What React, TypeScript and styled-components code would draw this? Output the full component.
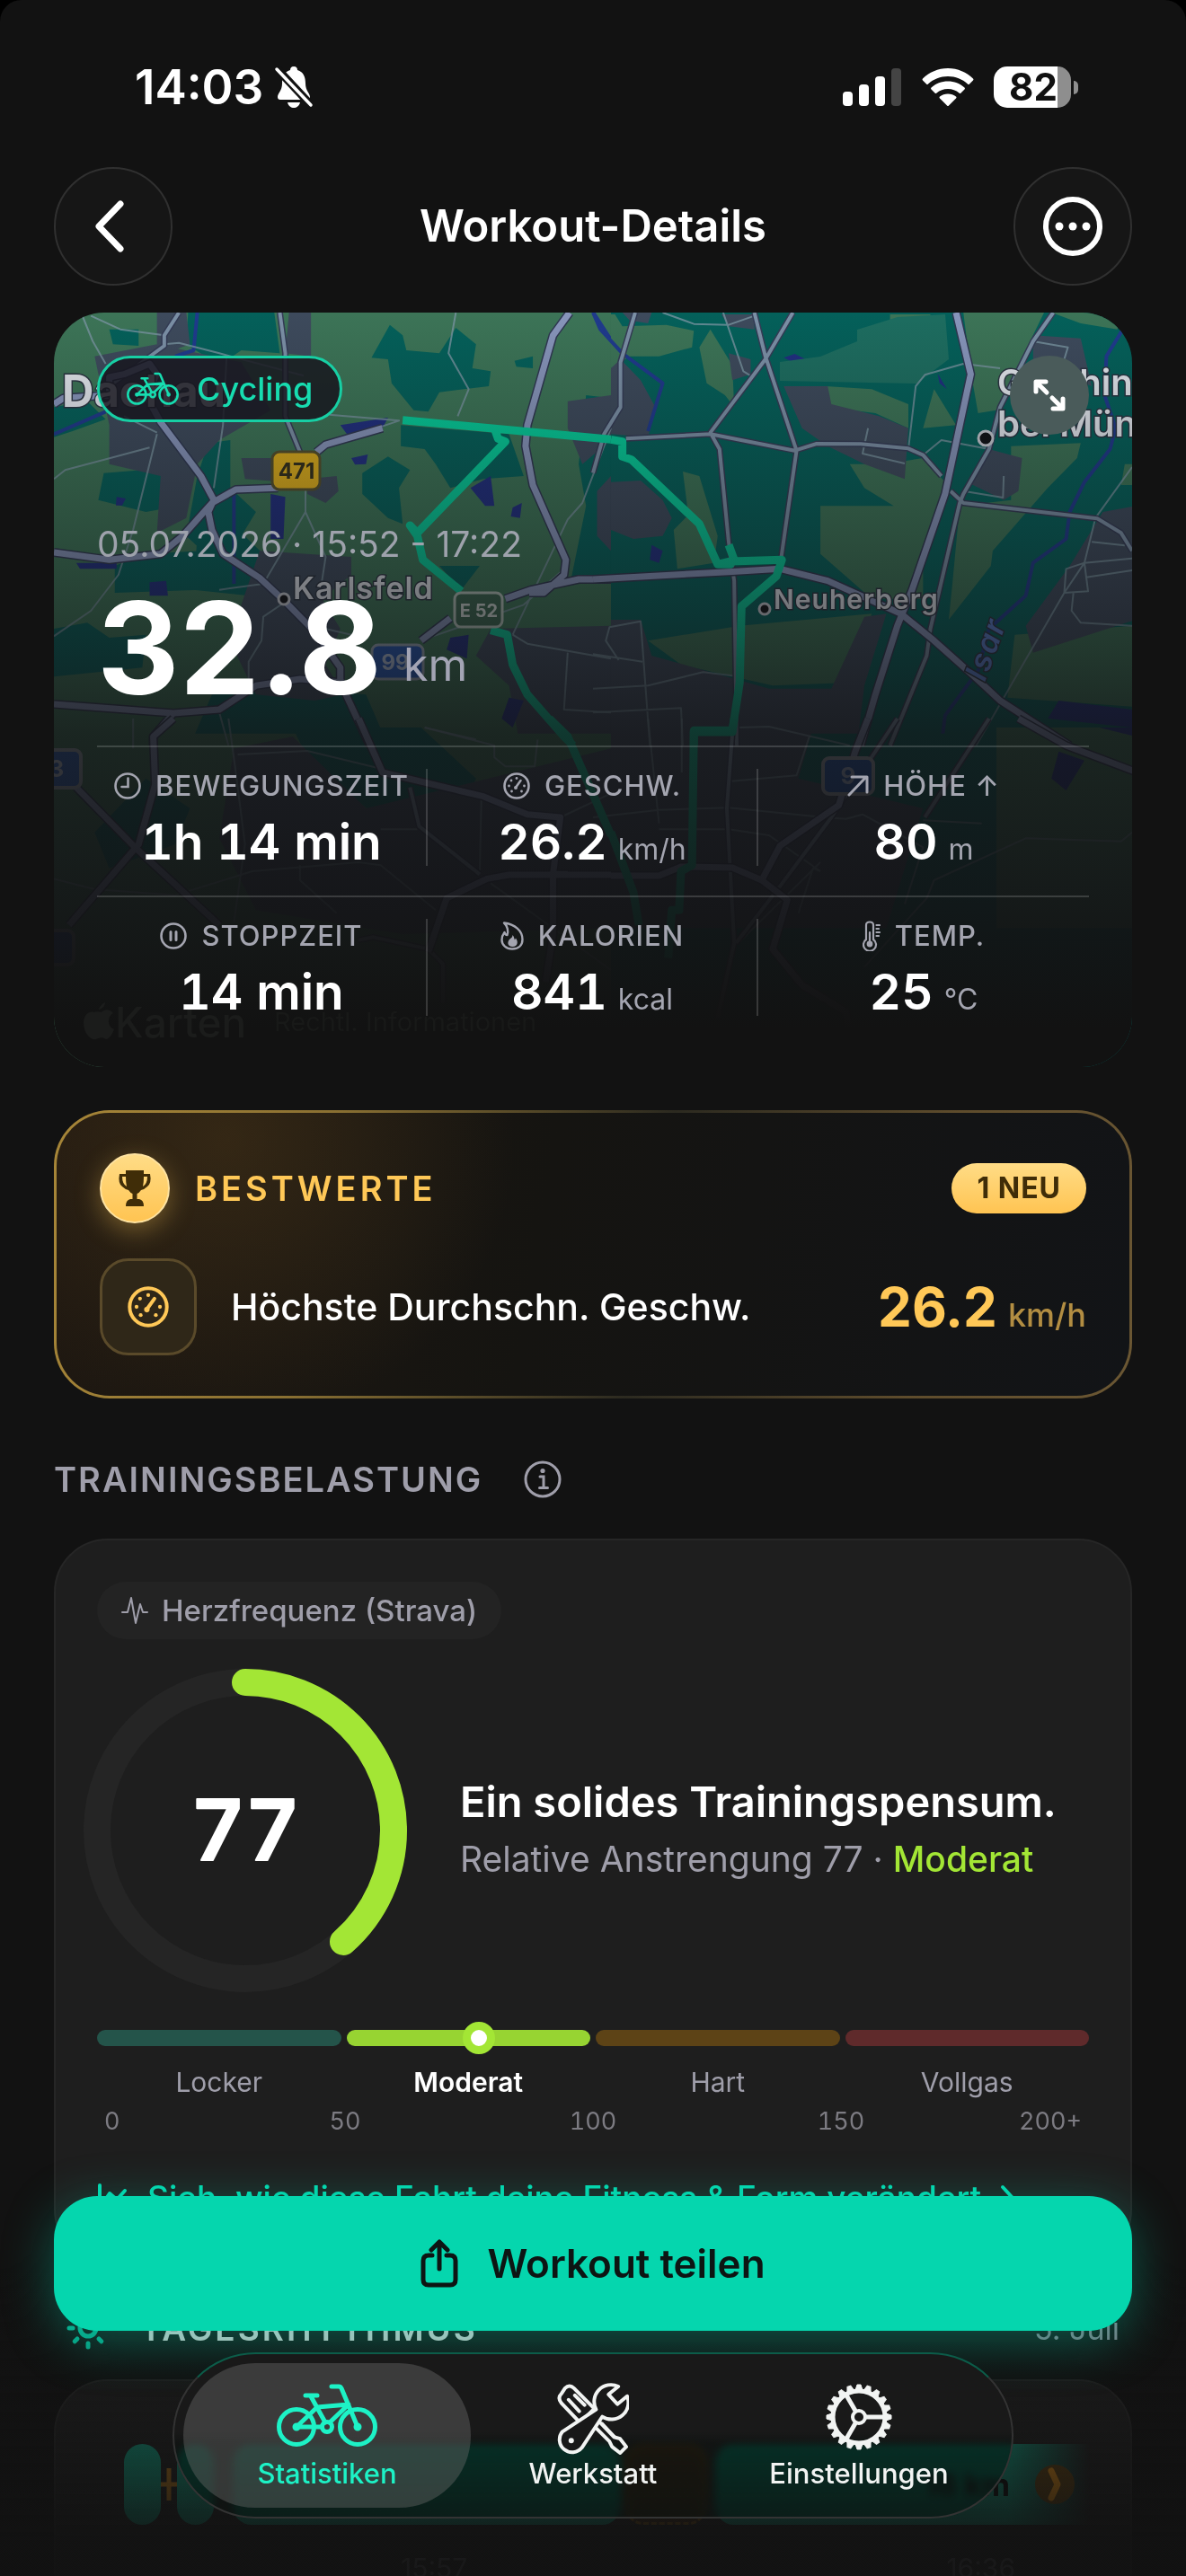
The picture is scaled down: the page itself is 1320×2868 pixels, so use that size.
import React from 'react'
import styled, { createGlobalStyle } from 'styled-components'

const mint = '#05d6ae'
const lime = '#a3e635'
const muted = '#9f9eaa'

const GlobalStyle = createGlobalStyle`
  * { box-sizing: border-box; }
  body {
    margin: 0;
    background: #000;
    color: #fff;
    font-family: Inter, "Liberation Sans", sans-serif;
  }
  button {
    border: 0;
    padding: 0;
    background: none;
    color: inherit;
    font: inherit;
    cursor: pointer;
  }
  h1, h2, h3, p { margin: 0; font: inherit; }
  svg { display: block; flex: none; }
`

const Screen = styled.div`
  height: 100vh;
  overflow-y: auto;
  scrollbar-width: none;
  background: #121212;
  border-radius: 24px 24px 0 0;
`

/* status bar and header */

const StatusBar = styled.div`
  display: flex;
  align-items: center;
  justify-content: space-between;
  height: 60px;
  margin-top: 67px;
  padding: 0 120px 0 150px;
`

const StatusGroup = styled.div<{ $gap: number }>`
  display: flex;
  align-items: center;
  gap: ${(props) => props.$gap}px;
`

const Clock = styled.span`
  font-size: 53px;
  font-weight: 600;
  line-height: 64px;
`

const Battery = styled.span`
  display: flex;
  align-items: center;
  gap: 3px;
`

const BatteryBody = styled.span`
  width: 86px;
  height: 46px;
  padding-left: 2px;
  border-radius: 15px;
  background: linear-gradient(90deg, #fff 82%, #8e8e8e 82%);
  color: #111;
  font-size: 42px;
  font-weight: 700;
  line-height: 46px;
  text-align: center;
`

const BatteryCap = styled.span`
  width: 5px;
  height: 15px;
  border-radius: 0 5px 5px 0;
  background: #8e8e8e;
`

const Header = styled.header`
  display: flex;
  align-items: center;
  justify-content: space-between;
  margin-top: 59px;
  padding: 0 60px;
`

const RoundButton = styled.button`
  display: grid;
  place-items: center;
  width: 132px;
  height: 132px;
  border: 2px solid #303030;
  border-radius: 50%;
  background: #161616;
`

const Title = styled.h1`
  font-size: 49px;
  font-weight: 600;
  line-height: 60px;
`

const Main = styled.main`
  display: flex;
  flex-direction: column;
  padding: 30px 60px 460px;
`

/* map card */

const MapCard = styled.section`
  position: relative;
  overflow: hidden;
  padding: 48px 48px 24px;
  border-radius: 56px;
  box-shadow: inset 0 0 0 2px #181818;
`

const MapCanvas = styled.svg`
  position: absolute;
  inset: 0;
  width: 100%;
  height: 100%;
`

const MapContent = styled.div`
  position: relative;
`

const MapTop = styled.div`
  display: flex;
  align-items: flex-start;
  justify-content: space-between;
`

const SportPill = styled.span`
  display: flex;
  align-items: center;
  gap: 20px;
  height: 74px;
  padding: 0 30px;
  border: 3px solid #17cfa4;
  border-radius: 37px;
  background: rgba(23, 22, 30, 0.84);
  color: #17dcb0;
  font-size: 36px;
  font-weight: 500;
`

const ExpandButton = styled.button`
  display: grid;
  place-items: center;
  width: 88px;
  height: 88px;
  border-radius: 50%;
  background: #4a5b5a;
`

const DateLine = styled.p`
  margin-top: 98px;
  color: #9ea2ac;
  font-size: 39px;
  line-height: 48px;
`

const Distance = styled.div`
  display: flex;
  align-items: flex-end;
  gap: 24px;
  margin: 19px 0 37px;
  font-size: 142px;
  font-weight: 700;
  line-height: 144px;
`

const DistanceUnit = styled.span`
  padding-bottom: 26px;
  color: #a3a4b4;
  font-size: 50px;
  font-weight: 400;
  line-height: 54px;
`

const MetricGrid = styled.div`
  display: grid;
  grid-template-columns: repeat(3, 1fr);
`

const MetricCell = styled.div`
  padding: 24px 0 33px;
  border-top: 2px solid rgba(255, 255, 255, 0.16);

  &:not(:nth-child(3n)) > div {
    border-right: 2px solid rgba(255, 255, 255, 0.16);
  }
`

const Metric = styled.div`
  display: flex;
  flex-direction: column;
  align-items: center;
  gap: 16px;
`

const MetricLabel = styled.span`
  display: flex;
  align-items: center;
  gap: 16px;
  color: #a4a5b0;
  font-size: 31px;
  font-weight: 500;
  letter-spacing: 1px;
  line-height: 38px;
`

const MetricValue = styled.span`
  font-size: 55px;
  font-variant-numeric: tabular-nums;
  font-weight: 600;
  line-height: 54px;
`

const MetricUnit = styled.span`
  margin-left: 12px;
  color: #a4a5b0;
  font-size: 32px;
  font-weight: 400;
  line-height: 32px;
`

/* personal bests */

const BestCard = styled.section`
  display: flex;
  flex-direction: column;
  gap: 39px;
  margin-top: 48px;
  padding: 45px 48px;
  border: 3px solid transparent;
  border-radius: 62px;
  background:
    radial-gradient(circle at 190px 30px, rgba(86, 62, 26, 0.42), transparent 320px) padding-box,
    linear-gradient(100deg, #1f1811, #151411 45%, #121417) padding-box,
    linear-gradient(100deg, #a78638, #8a7032 25%, #2c2a20 55%, #5e4c2c 80%, #6b5733) border-box;
`

const BestRow = styled.div`
  display: flex;
  align-items: center;
`

const Trophy = styled.span`
  display: grid;
  place-items: center;
  width: 78px;
  height: 78px;
  border: 2px solid #ffe3a0;
  border-radius: 50%;
  background: linear-gradient(#ffdc86, #ffc452);
  box-shadow: 0 8px 28px rgba(255, 200, 87, 0.35);
`

const BestTitle = styled.h2`
  flex: 1;
  margin-left: 28px;
  color: #ffc857;
  font-size: 38px;
  font-weight: 600;
  letter-spacing: 4px;
`

const NewBadge = styled.span`
  padding: 0 28px;
  border-radius: 28px;
  background: linear-gradient(#ffdc86, #ffc452);
  color: #402d08;
  font-size: 32px;
  font-weight: 700;
  letter-spacing: 1px;
  line-height: 56px;
`

const BestTile = styled.span`
  display: grid;
  place-items: center;
  width: 108px;
  height: 108px;
  border: 3px solid #5a4a2a;
  border-radius: 32px;
  background: #2f2718;
  color: #ffc857;
`

const BestName = styled.span`
  flex: 1;
  margin-left: 38px;
  font-size: 41px;
  font-weight: 500;
`

const BestValue = styled.span`
  color: #ffc857;
  font-size: 60px;
  font-weight: 700;
`

const BestUnit = styled.span`
  margin-left: 12px;
  color: #b28d42;
  font-size: 36px;
  font-weight: 500;
`

/* training load */

const SectionHead = styled.div`
  display: flex;
  align-items: center;
  gap: 46px;
  height: 56px;
  margin: 62px 0 38px;
  color: ${muted};
`

const SectionTitle = styled.h2`
  font-size: 38px;
  font-weight: 600;
  letter-spacing: 2px;
`

const Card = styled.section`
  padding: 46px;
  border: 2px solid #262626;
  border-radius: 60px;
  background: #1e1e1e;
`

const SourceChip = styled.span`
  display: inline-flex;
  align-items: center;
  gap: 15px;
  height: 64px;
  padding: 0 27px;
  border-radius: 32px;
  background: #232323;
  color: ${muted};
  font-size: 33px;
  font-weight: 500;
  vertical-align: top;
`

const LoadRow = styled.div`
  display: flex;
  align-items: center;
  gap: 74px;
  margin: 48px 0 57px;
`

const Ring = styled.svg`
  overflow: visible;
  font-size: 94px;
  font-variant-numeric: tabular-nums;
  font-weight: 600;
`

const LoadTitle = styled.h3`
  font-size: 47px;
  font-weight: 600;
  line-height: 64px;
`

const LoadSub = styled.p`
  color: ${muted};
  font-size: 39px;
  line-height: 64px;
`

const Highlight = styled.span`
  color: ${lime};
  font-weight: 500;
`

const Zones = styled.div`
  position: relative;
  display: grid;
  grid-template-columns: repeat(4, 1fr);
  gap: 20px 6px;
`

const ZoneBar = styled.span<{ $color: string }>`
  height: 18px;
  border-radius: 9px;
  background: ${(props) => props.$color};
`

const ZoneName = styled.span<{ $active: boolean }>`
  color: ${(props) => (props.$active ? '#fff' : muted)};
  font-size: 30px;
  font-weight: ${(props) => (props.$active ? 600 : 400)};
  line-height: 40px;
  text-align: center;
`

const ZoneMarker = styled.span`
  position: absolute;
  top: -9px;
  width: 36px;
  height: 36px;
  margin-left: -18px;
  border: 9px solid ${lime};
  border-radius: 50%;
  background: #fff;
`

const Scale = styled.div`
  display: grid;
  grid-template-columns: 1fr 2fr 2fr 2fr 1fr;
  margin-top: 8px;
  color: #7c7b82;
  font-size: 27px;
  font-variant-numeric: tabular-nums;
  line-height: 32px;
  text-align: center;

  span:first-child { padding-left: 8px; text-align: left; }
  span:last-child { padding-right: 8px; text-align: right; }
`

const FitnessLink = styled.a`
  display: flex;
  align-items: center;
  gap: 20px;
  margin-top: 44px;
  color: ${mint};
  font-size: 37px;
  font-weight: 500;
  line-height: 50px;
  text-decoration: none;
  white-space: nowrap;
`

/* daily rhythm */

const RhythmHead = styled.div`
  display: flex;
  align-items: center;
  height: 56px;
  margin: 44px 0 29px;
  padding: 0 14px;
`

const RhythmTitle = styled.h2`
  flex: 1;
  margin-left: 34px;
  font-size: 37px;
  font-weight: 600;
  letter-spacing: 3px;
`

const RhythmDate = styled.span`
  color: ${muted};
  font-size: 34px;
`

const Track = styled.div`
  display: flex;
  align-items: center;
  height: 90px;
  margin: 24px 0 30px;
  padding-left: 30px;
`

const Ride = styled.span<{ $width: number }>`
  flex: ${(props) => props.$width} 0 0;
  height: 90px;
  border-radius: 21px;
  background: #109377;
`

const LastRide = styled.span`
  display: flex;
  flex: 410 0 0;
  align-items: center;
  justify-content: flex-end;
  gap: 28px;
  height: 90px;
  padding-right: 16px;
  border-radius: 21px 0 0 21px;
  background: linear-gradient(90deg, #109377 78%, transparent);
  color: #050505;
  font-size: 34px;
  font-weight: 700;
`

const TrackGap = styled.span<{ $width: number }>`
  display: grid;
  flex: ${(props) => props.$width} 0 0;
  place-items: center;
`

const Pause = styled.span`
  flex: 88 0 0;
  height: 90px;
  border: 3px dashed #7a5410;
  border-radius: 21px;
  background: #3a2410;
`

const Times = styled.div`
  display: flex;
  justify-content: space-between;
  padding: 0 82px 0 338px;
  color: #6a6a6e;
  font-size: 30px;
`

/* floating dock */

const Dock = styled.div`
  position: fixed;
  right: 0;
  bottom: 0;
  left: 0;
  display: flex;
  flex-direction: column;
  align-items: center;
  gap: 24px;
  padding: 60px 60px 64px;
  background: linear-gradient(transparent 25%, rgba(18, 18, 18, 0.5) 62%, rgba(18, 18, 18, 0.92) 92%);
  pointer-events: none;

  button { pointer-events: auto; }
`

const ShareButton = styled.button`
  display: flex;
  align-items: center;
  justify-content: center;
  gap: 32px;
  width: 100%;
  height: 150px;
  border-radius: 48px;
  background: ${mint};
  box-shadow: 0 12px 56px rgba(5, 214, 174, 0.36);
  color: #0d1513;
  font-size: 44px;
  font-weight: 600;
`

const TabBar = styled.nav`
  display: grid;
  grid-template-columns: repeat(3, 296px);
  height: 185px;
  padding: 10px 22px;
  border: 2px solid #333;
  border-top-color: #0c5c49;
  border-radius: 93px;
  background: linear-gradient(#191919 48%, rgba(12, 18, 16, 0.5) 56%);
  backdrop-filter: blur(4px) saturate(1.4);
`

const Tab = styled.button<{ $active?: boolean }>`
  display: flex;
  flex-direction: column;
  align-items: center;
  justify-content: space-between;
  margin: 0 ${(props) => (props.$active ? -12 : 0)}px;
  padding: 22px 0 18px;
  border-radius: 80px;
  background: ${(props) => (props.$active ? 'rgba(108, 108, 108, 0.42)' : 'none')};
  color: ${(props) => (props.$active ? '#1df2c6' : '#f2f4f3')};
  font-size: 31px;
  font-weight: 500;
  line-height: 40px;
`

/* icons */

const BikeIcon = ({ width, stroke }: { width: number; stroke: number }) => (
  <svg width={width} height={(width * 72) / 112} viewBox="0 -1 112 72" fill="none" stroke="currentColor" strokeWidth={stroke} strokeLinecap="round" strokeLinejoin="round">
    <circle cx="22" cy="48" r="19.5" />
    <circle cx="90" cy="48" r="19.5" />
    <circle cx="56" cy="48" r="5.5" />
    <path d="M50 48H22L45 26L80 23L59 43M32 13H45M38 14L54 43M61 3H69Q71 3 72 5L90 48" />
    <circle cx="22" cy="48" r="2" />
    <circle cx="90" cy="48" r="2" />
  </svg>
)

const ToolsIcon = () => (
  <svg width="80" height="80" viewBox="-1 -1 81 81" fill="none" stroke="currentColor" strokeWidth="4" strokeLinecap="round" strokeLinejoin="round">
    <path d="M8 5Q13 0 18 5L41 28L25 44L4 22Q-1 16 4 11ZM12 18L24 31M19 13L30 24" />
    <path d="M43 39L63 60L70 62L77 71L70 78L61 71L58 65L38 45" />
    <path d="M50 44L66 61" strokeWidth="2" />
    <path d="M68 3A19 19 0 0 0 43 29L5 54A14 14 0 1 0 27 72L50 37A19 19 0 0 0 78 14L67 23L57 12Z" fill="#181818" />
    <circle cx="15" cy="64" r="3" fill="currentColor" stroke="none" />
  </svg>
)

const ChainringIcon = () => (
  <svg width="76" height="76" viewBox="-38 -38 76 76" fill="none" stroke="currentColor" strokeWidth="5">
    <circle r="29" />
    <circle r="7" strokeWidth="4" />
    {[0, 120, 240].map((deg) => (
      <path key={deg} d="M8 0H28" transform={`rotate(${deg})`} />
    ))}
    {Array.from({ length: 20 }, (_, i) => (
      <path key={i} d="M30 -4L36 -2V2L30 4Z" fill="currentColor" strokeWidth="1" transform={`rotate(${i * 18})`} />
    ))}
  </svg>
)

const GaugeIcon = ({ size }: { size: number }) => (
  <svg width={size} height={size} viewBox="0 0 30 30" fill="none" stroke="currentColor" strokeWidth="2.6" strokeLinecap="round">
    <circle cx="15" cy="15" r="13.5" />
    <path d="M14.5 16L19.5 9" />
    <circle cx="14" cy="17" r="2" fill="currentColor" stroke="none" />
    <g fill="currentColor" stroke="none">
      <circle cx="15" cy="6.5" r="1.4" />
      <circle cx="9" cy="9" r="1.4" />
      <circle cx="6.5" cy="15" r="1.4" />
      <circle cx="23.5" cy="15" r="1.4" />
      <circle cx="9.5" cy="21" r="1.4" />
      <circle cx="20.5" cy="21" r="1.4" />
    </g>
  </svg>
)

const ClockIcon = () => (
  <svg width="30" height="30" viewBox="0 0 30 30" fill="none" stroke="currentColor" strokeWidth="2.6" strokeLinecap="round">
    <circle cx="15" cy="15" r="13.5" />
    <path d="M15.5 6.5V16H8.5" />
  </svg>
)

const PauseIcon = () => (
  <svg width="30" height="30" viewBox="0 0 30 30" fill="none" stroke="currentColor" strokeWidth="2.6" strokeLinecap="round">
    <circle cx="15" cy="15" r="13.5" />
    <path d="M12 10.5V19.5M18 10.5V19.5" strokeWidth="3" />
  </svg>
)

const FlameIcon = () => (
  <svg width="26" height="32" viewBox="0 0 26 32" fill="none" stroke="currentColor" strokeWidth="2.4" strokeLinejoin="round">
    <path d="M4 1.500C16 3 24.500 10 24.500 20C24.500 27 19.500 30.500 13 30.500S1.500 26 1.500 20.500C1.500 17 3 14 4.500 12C5 14 6 15 7.500 15C9 11 8 5 4 1.500Z" />
    <path d="M13.500 15C15.500 17 15 19 16 20.500C16.500 19.500 16.500 19 17 18.500C20 22 19.500 28 13.500 28S7 22 11 19C12.500 18 13.500 17 13.500 15Z" fill="currentColor" stroke="none" />
  </svg>
)

const ThermoIcon = () => (
  <svg width="20" height="34" viewBox="0 0 20 34" fill="none" stroke="currentColor" strokeWidth="2.2" strokeLinecap="round">
    <path d="M4 21V5Q4 1.500 8 1.500T12 5V21A7 7 0 1 1 4 21Z" />
    <path d="M8 13V24M15.500 5H19M15.500 9H18M15.500 13H19M15.500 17H18" />
    <circle cx="8" cy="26" r="3.400" fill="currentColor" stroke="none" />
  </svg>
)

const ClimbIcon = () => (
  <svg width="24" height="24" viewBox="0 0 24 24" fill="none" stroke="currentColor" strokeWidth="3" strokeLinecap="round" strokeLinejoin="round">
    <path d="M2 22L21 2M5 2H22V19" />
  </svg>
)

const BellOffIcon = () => (
  <svg width="44" height="48" viewBox="0 0 44 48">
    <path d="M22 1C25 1 26 3 26 5C33 7 35 13 35 20C35 28 40 31 40 35C40 37 39 38 37 38H7C5 38 4 37 4 35C4 31 9 28 9 20C9 13 11 7 18 5C18 3 19 1 22 1ZM15 41H29C28 45 25 47 22 47S16 45 15 41Z" fill="#fff" />
    <path d="M3 3L42 45" stroke="#121212" strokeWidth="9" />
    <path d="M3 4L41 44" stroke="#fff" strokeWidth="3.500" strokeLinecap="round" />
  </svg>
)

/* map drawing, stored as the four tiles of the snapshot */

type Tile = {
  at: string
  base?: string
  teal?: string
  green?: string
  urban?: string
  water?: string
  river?: string
  minor?: string
  mid?: string
  major?: string
  route?: string
}

const tiles: Tile[] = [
  {
    at: 'matrix(.40816 0 0 .33333 -20 -18)',
    base: '#3c7457',
    teal:
      'M415 54H650L665 190L560 180L500 230L410 160ZM200 110H280V165L210 160ZM965 95L1000 130L1010 180L1100 190L1145 105L1200 160L1190 240L1240 250L1235 300L1100 320L1070 385L1030 380L970 290L960 210L915 205ZM1305 215L1355 200V240L1310 235ZM995 430L1290 460L1330 600L1220 610L1130 640L1090 560L1060 510L995 500ZM890 590L960 535L1020 580L990 640L1000 760L960 740L890 660ZM185 590L390 570V700L300 720L170 680ZM470 490L530 480V640L600 720L560 800L480 880L410 800L440 600ZM215 900L300 860L450 850V980L215 990ZM1500 330L1568 340V950L1460 940L1500 700L1480 560ZM49 1110L140 1090L200 1140L300 1130L290 1240L49 1270ZM440 800L560 790L620 860L580 1000L430 980ZM480 1330L700 1310L900 1330L960 1500H420ZM49 370L140 350L190 410L100 450L49 470ZM1100 900L1210 900L1160 980Z',
    urban:
      'M330 54H410L420 160L330 200ZM690 54H750V200L680 190ZM160 200L330 160L560 220L640 380L500 480L440 560L410 740L330 790L340 600L200 560V430ZM560 540H680V620L570 610ZM740 610L820 600L825 650L790 690L740 660ZM610 850L860 870V930L780 1010L830 1110L790 1230L840 1330L760 1350L600 1330L540 1180L560 1030ZM1450 350L1568 330V480L1490 560L1450 440ZM1240 1110L1568 1100V1500H1320L1290 1300L1200 1200ZM1530 650L1568 600V850L1530 800Z',
    water:
      'M640 660L680 670L675 810H640ZM830 430L960 405L945 440L860 480ZM860 540L905 528L900 560L870 562ZM1185 640L1240 600L1250 700L1225 700ZM1300 705L1325 690L1320 740L1295 735ZM310 955L355 950L360 1000H310ZM220 670L245 675L235 698H218ZM110 890H220V910H120ZM1290 1340L1330 1350L1300 1440L1270 1410ZM1130 1140L1180 1130L1175 1210L1120 1180Z',
    river: 'M440 54L430 180L380 200M49 460L190 385M1520 54L1568 145M540 640V960',
    minor:
      'M125 60L155 150L190 225M150 65L230 110L350 130M350 160L390 155L500 190L730 265M330 460L265 780L225 930L150 1050L49 1135M49 610L80 580L310 505M520 200L510 430L485 640M330 455L240 400M1145 54L1125 190L1180 310L1150 400M1568 440L1490 690L1450 745L1300 1130M800 395L990 415L930 440M735 520V720L790 870L780 950M735 720L620 960L500 980M1060 1145L1330 1030L1450 900M1300 1130L1340 1160L1568 1210M1450 1190L1440 1380L1568 1390M770 1105L860 1130M680 1020L620 1070L615 1150L580 1220V1290M500 1390L525 1500M1060 1440L1200 1480',
    mid: 'M390 54L350 130L350 165L200 300M665 54L680 190V400L720 520',
    major:
      'M1455 54L1410 130L1340 430L1335 500L1355 630L1445 880L1440 930L1385 990L1345 990M49 360L75 340L200 330L200 270L240 260L310 225L330 260L300 330L340 420L450 600L485 680L470 720L480 780L510 860L610 940L680 1020L760 1120L830 1240V1290L910 1500M49 855L200 880L340 860L400 800L480 690L545 645L660 640M765 520L790 495L945 440M1050 1150L1130 1075M1280 1010L1350 980L1480 945H1568M49 1362L375 1392L500 1380L600 1300L720 1278L840 1290M375 1392L320 1470V1500',
    route:
      'M1000 413L1568 478M1250 440L1260 475L1280 485L1040 790L1020 765L1040 800L1055 880L1160 985M1240 1115L1285 1130L1300 1230L1340 1330L1440 1470L1465 1500',
  },
  {
    at: 'matrix(.40816 0 0 .33333 600 -18)',
    base: '#04605a',
    green:
      'M49 60H60L80 100L200 95L275 115L270 170L180 200L100 200L49 240ZM320 110L380 230L385 370L360 330L310 290L290 170ZM635 300L760 310L860 360V440L770 390L640 370ZM1010 54H1230L1100 380L1050 390L1030 250ZM930 310L990 430L900 440ZM1140 500L1330 490L1320 540L1240 640L1090 850L1085 900L970 1080L980 960L1000 700L1140 680ZM700 560H800L900 540L960 620L900 900L810 850L820 700L740 640ZM245 585L290 600L340 800L330 890L230 910L220 780L260 730ZM150 1150L400 1100L760 1060L700 1290L490 1300L240 1230ZM1150 1130L1470 1100V1370L1130 1340ZM1250 54H1440L1430 110L1330 90ZM1450 560H1480V630H1440ZM810 60H920V85H810ZM620 700H820L860 850L900 900V1010H760L620 860Z',
    urban:
      'M49 240L75 210L130 280L170 370L150 470L49 460ZM80 54H160L150 90L100 80ZM350 60H440V110L370 100ZM370 190L430 210V260L380 280ZM520 300H640L650 360L780 400L860 440L850 610L740 560L640 500L570 440ZM1080 510L1170 540L1160 650L1120 680L1020 620ZM1200 130L1330 140L1360 300L1200 220ZM1390 720L1480 700V1080L1200 1190L1180 1100L1300 900ZM49 1080H130L160 1200L480 1310H650L740 1070L800 1060L740 1300L720 1500H49ZM49 620L130 615L190 680L215 740L190 800L110 810L49 780Z',
    water:
      'M520 205L550 192L580 210L550 222ZM940 258L965 310L945 290ZM160 830L190 850L180 890L155 880ZM1270 1350L1470 1380V1440L1240 1410Z',
    river:
      'M1445 110L1400 200L1395 330L1425 440L1410 510L1340 620L1300 720L1290 810L1200 890L1180 1000L1080 1110L1050 1250L960 1400L950 1500M0 54L20 110L80 190L190 290L150 450',
    minor:
      'M355 54L410 250L430 265M190 54L275 92L370 95L440 65M1010 225L905 262L880 300L860 510M750 440L735 525L850 558M1010 225L1110 240M900 530L950 480L1080 510M1470 570L1370 740L1340 890L1285 990L1045 1500M1470 875L1340 890L1350 985L1285 990L1290 910L1340 890M1345 938L1470 915M1310 990L1305 1050L1330 1090L1470 1100M1360 820L1450 832M1200 150L1295 170L1285 210M1120 600L1118 672L1010 650M70 1215L35 1150L45 1105L130 1085L155 1500M0 1195L135 1220M0 1310L150 1300L300 1255L390 1268M0 1390L240 1375L245 1500M395 1440L480 1437L700 1500',
    mid:
      'M90 475L320 460L550 515L610 492L730 493L860 508L900 530L950 600M975 650L1010 690L1375 742L1440 790L1470 850M440 54L470 200L555 515L510 900M545 54L470 210L320 455L345 510L370 820L385 950L392 1500M1255 54L1200 150L1110 370L1080 510L1010 660L1000 690L920 1110L910 1200L810 1500M115 54L75 220V370L30 460L0 590',
    major:
      'M990 54L1030 260L960 660L870 980L830 1100L770 1330L730 1500M0 945L370 920L510 910L640 950L840 1060L930 1150L1040 1270L1110 1350L1300 1500',
    route:
      'M49 478L80 485V535L105 545L290 760L340 895H375L385 880L370 830M340 895L375 885L515 880L500 935L405 1035L400 1290L380 1450H275V1500',
  },
  {
    at: 'matrix(.40816 0 0 .33333 -20 452)',
    base: '#3c7457',
    teal: 'M700 30L1050 30L1200 200L1150 330L950 350L740 130ZM300 200L420 300L380 420L200 500L160 380Z',
    urban: 'M540 100L700 60L900 300L1568 100V700L1000 720L600 640L500 400Z',
    minor:
      'M525 0L545 180L570 420L540 680M550 120L740 108L950 170M0 520L160 570L380 590L590 510L880 480L940 490L1090 640M1060 30L1250 90V130L1280 160H1360L1368 70M265 0V100M1568 250L1430 330M1210 520L1215 250M720 490V540L820 650M1040 370H940M1568 840L1240 550',
    mid: 'M1020 230L1045 360L1210 520M880 740L920 730L1070 770L1110 820V950',
    major:
      'M375 0L320 60L325 220L280 420L90 690M110 230L270 430L500 690M880 0L945 180L1220 260L1340 320L1430 330L1410 520L1450 520M1070 780L1120 600L1230 535L1290 522H1568M1410 520V720L1390 880',
    route: 'M1400 0L1450 60L1500 200L1568 390',
  },
  {
    at: 'matrix(.40816 0 0 .33333 600 452)',
    base: '#04605a',
    green: 'M1100 30H1480V700H1100Z',
    urban: 'M49 30L600 30L560 200L900 300L800 700H49Z',
    water: 'M1270 110L1340 140L1290 240L1250 200ZM1380 30H1480V60Z',
    minor:
      'M150 0L180 350M242 0V180M590 60L555 190L370 210M0 330L180 305L370 298L630 330L690 335L735 320L900 430L850 620M900 340L1060 350M1470 380L1440 410L1180 400L930 540L910 600L740 830M620 510L600 500L560 650M400 745L620 480M180 370L370 370L480 390L620 510',
    mid: 'M830 0L650 330L510 560L390 750M1080 0L905 330M380 50L365 300L385 750L340 1000',
    major:
      'M49 525H180L240 495L380 498L460 540L530 605L490 770L570 890L690 980L705 1100M750 0L715 110L670 290L510 425L460 540M1160 0L1290 90L1480 178',
    route: 'M49 380L110 580L125 690M385 0L380 45H275L270 490L240 510L235 640H215L205 800',
  },
]

const line = { vectorEffect: 'non-scaling-stroke' as const, fill: 'none', strokeLinejoin: 'round' as const }

const WorkoutMap = () => (
  <MapCanvas viewBox="0 0 1200 840" preserveAspectRatio="xMidYMid slice" aria-hidden="true">
    <defs>
      <linearGradient id="mapFade" x1="0" y1="0" x2="0" y2="1">
        <stop offset="0" stopColor="#121212" stopOpacity="0" />
        <stop offset=".3" stopColor="#121214" stopOpacity=".4" />
        <stop offset=".45" stopColor="#121214" stopOpacity=".62" />
        <stop offset=".56" stopColor="#121214" stopOpacity=".8" />
        <stop offset=".76" stopColor="#121214" stopOpacity=".91" />
        <stop offset=".95" stopColor="#121212" stopOpacity="1" />
      </linearGradient>
    </defs>
    {tiles.map((tile) => (
      <g key={tile.at} transform={tile.at}>
        <path d="M49 50H1568V1500H49Z" fill={tile.base} />
        <path d={tile.green} fill="#3c7457" />
        <path d={tile.teal} fill="#04605a" />
        <path d={tile.urban} fill="#3d4a5c" />
        <path d={tile.water} fill="#202f80" />
        <path d={tile.river} {...line} stroke="#1f3a8c" strokeWidth="4" />
      </g>
    ))}
    <path d="M894 19L939 5L992 2L996 52L960 79L808 76L808 55L853 49L894 32Z" fill="#1d6d60" />
    {tiles.map((tile) => (
      <g key={tile.at} transform={tile.at}>
        <path d={tile.minor} {...line} stroke="#7893a0" strokeOpacity=".8" strokeWidth="2" />
        <path d={tile.mid} {...line} stroke="#343c56" strokeWidth="7" />
        <path d={tile.mid} {...line} stroke="#7b90a6" strokeWidth="4" />
        <path d={tile.major} {...line} stroke="#2f3852" strokeWidth="10" />
        <path d={tile.major} {...line} stroke="#8795bb" strokeWidth="7" />
      </g>
    ))}
    {tiles.map((tile) => (
      <path key={tile.at} transform={tile.at} d={tile.route} {...line} stroke="#05cc9a" strokeWidth="9" />
    ))}
    <g fontWeight="700" textAnchor="middle">
      <rect x="243" y="155" width="53" height="42" rx="8" fill="#e0b01c" stroke="#55502c" strokeWidth="3" />
      <text x="270" y="185" fontSize="24" fill="#33301c">471</text>
      <rect x="446" y="312" width="53" height="38" rx="7" fill="#3a6650" stroke="#b5c4bc" strokeWidth="3" />
      <text x="473" y="339" fontSize="20" fill="#cfd8d4">E 52</text>
      <rect x="354" y="370" width="57" height="38" rx="7" fill="#2458b8" stroke="#99a7b8" strokeWidth="3" />
      <text x="380" y="398" fontSize="24" fill="#b3c2dc">99</text>
      <rect x="-24" y="487" width="54" height="42" rx="7" fill="#2c62c0" stroke="#a0aab6" strokeWidth="4" />
      <text x="3" y="517" fontSize="26" fill="#c4cddf">3</text>
      <rect x="856" y="496" width="56" height="40" rx="7" fill="#1e56b4" stroke="#a5adb8" strokeWidth="4" />
      <text x="884" y="525" fontSize="26" fill="#a9bcdf">9</text>
      <rect x="-24" y="688" width="46" height="38" rx="7" fill="#1f4da2" stroke="#828c98" strokeWidth="4" />
    </g>
    <g fill="#e3e7ee" fontWeight="600" stroke="#2b3442" strokeWidth="3" paintOrder="stroke">
      <text x="9" y="105" fontSize="49" fontWeight="700">Dachau</text>
      <text x="1050" y="92" fontSize="40">Garching</text>
      <text x="1050" y="138" fontSize="40">bei München</text>
      <text x="266" y="319" fontSize="34" letterSpacing="1">Karlsfeld</text>
      <text x="801" y="330" fontSize="30" letterSpacing="1">Neuherberg</text>
      <text x="0" y="0" fontSize="34" fill="#5b7fd0" fontStyle="italic" letterSpacing="2" transform="translate(1036 412) rotate(-70)">Isar</text>
    </g>
    <g fill="#101216" stroke="#c8ccd4" strokeWidth="3">
      <circle cx="256" cy="319" r="6" />
      <circle cx="1037" cy="140" r="8" />
      <circle cx="791" cy="330" r="6" />
    </g>
    <rect width="1200" height="840" fill="url(#mapFade)" />
    <g fill="#1b1c1b">
      <path d="M50 775C52 771 54 769 57 768C57 772 54 775 50 776ZM45 779C48 777 53 780 54 778C58 775 63 776 66 780C59 784 59 795 67 798C64 806 60 811 56 808C53 806 49 808 47 809C41 811 33 802 33 791C33 783 38 777 45 779Z" />
      <text x="68" y="807" fontSize="46" fontWeight="500">Karten</text>
      <text x="245" y="800" fontSize="29" fill="#181918">Rechtl. Informationen</text>
    </g>
  </MapCanvas>
)

const metrics = [
  { icon: <ClockIcon />, label: 'BEWEGUNGSZEIT', value: '1h 14 min' },
  { icon: <GaugeIcon size={30} />, label: 'GESCHW.', value: '26.2', unit: 'km/h' },
  { icon: <ClimbIcon />, label: 'HÖHE ↑', value: '80', unit: 'm' },
  { icon: <PauseIcon />, label: 'STOPPZEIT', value: '14 min' },
  { icon: <FlameIcon />, label: 'KALORIEN', value: '841', unit: 'kcal' },
  { icon: <ThermoIcon />, label: 'TEMP.', value: '25', unit: '°C' },
]

const zones = [
  { name: 'Locker', color: '#24544a' },
  { name: 'Moderat', color: '#97d432' },
  { name: 'Hart', color: '#5d4316' },
  { name: 'Vollgas', color: '#5f2a2b' },
]

const effort = 77
const maxEffort = 200

const App: React.FC = () => {
  const circumference = 2 * Math.PI * 165

  return (
    <Screen>
      <GlobalStyle />
      <StatusBar>
        <StatusGroup $gap={12}>
          <Clock>14:03</Clock>
          <BellOffIcon />
        </StatusGroup>
        <StatusGroup $gap={22}>
          <svg width="66" height="42" viewBox="0 0 66 42" fill="#fff">
            <rect y="26" width="11" height="16" rx="4" />
            <rect x="18" y="18" width="11" height="24" rx="4" />
            <rect x="36" y="9" width="11" height="33" rx="4" />
            <rect x="54" width="11" height="42" rx="4" fill="#444" />
          </svg>
          <svg width="58" height="42" viewBox="0 0 58 42" fill="#fff">
            <path d="M29 0C40 0 50 4.500 57 11.500Q58 12.500 57 13.500L53 17.500Q52 18.500 51 17.500C45 12 37.500 9 29 9S13 12 7 17.500Q6 18.500 5 17.500L1 13.500Q0 12.500 1 11.500C8 4.500 18 0 29 0Z" />
            <path d="M29 14.500C36 14.500 42.500 17 47.500 21.500Q48.500 22.500 47.500 23.500L43.500 27.500Q42.500 28.500 41.500 27.500C38 24.500 34 23 29 23S20 24.500 16.500 27.500Q15.500 28.500 14.500 27.500L10.500 23.500Q9.500 22.500 10.500 21.500C15.500 17 22 14.500 29 14.500Z" />
            <path d="M29 28.500C32.500 28.500 35.500 29.500 38 31.500Q39 32.500 38 33.500L30 41.500Q29 42.500 28 41.500L20 33.500Q19 32.500 20 31.500C22.500 29.500 25.500 28.500 29 28.500Z" />
          </svg>
          <Battery>
            <BatteryBody>82</BatteryBody>
            <BatteryCap />
          </Battery>
        </StatusGroup>
      </StatusBar>

      <Header>
        <RoundButton aria-label="Zurück">
          <svg width="40" height="58" viewBox="0 0 40 58" fill="none" stroke="#fff" strokeWidth="7" strokeLinecap="round" strokeLinejoin="round">
            <path d="M28 4L4 29L28 54" />
          </svg>
        </RoundButton>
        <Title>Workout-Details</Title>
        <RoundButton aria-label="Mehr">
          <svg width="66" height="66" viewBox="0 0 66 66" fill="#fff">
            <circle cx="33" cy="33" r="30" fill="none" stroke="#fff" strokeWidth="6" />
            <circle cx="18" cy="33" r="4.500" />
            <circle cx="33" cy="33" r="4.500" />
            <circle cx="48" cy="33" r="4.500" />
          </svg>
        </RoundButton>
      </Header>

      <Main>
        <MapCard>
          <WorkoutMap />
          <MapContent>
            <MapTop>
              <SportPill>
                <BikeIcon width={58} stroke={5} />
                Cycling
              </SportPill>
              <ExpandButton aria-label="Karte vergrößern">
                <svg width="36" height="36" viewBox="0 0 36 36" fill="none" stroke="#fff" strokeWidth="5" strokeLinecap="round" strokeLinejoin="round">
                  <path d="M3 14V3H14M4 4L15 15M33 22V33H22M32 32L21 21" />
                </svg>
              </ExpandButton>
            </MapTop>
            <DateLine>05.07.2026 · 15:52 - 17:22</DateLine>
            <Distance>
              32.8<DistanceUnit>km</DistanceUnit>
            </Distance>
            <MetricGrid>
              {metrics.map((m) => (
                <MetricCell key={m.label}>
                  <Metric>
                    <MetricLabel>
                      {m.icon}
                      {m.label}
                    </MetricLabel>
                    <MetricValue>
                      {m.value}
                      {m.unit && <MetricUnit>{m.unit}</MetricUnit>}
                    </MetricValue>
                  </Metric>
                </MetricCell>
              ))}
            </MetricGrid>
          </MapContent>
        </MapCard>

        <BestCard>
          <BestRow>
            <Trophy>
              <svg width="38" height="42" viewBox="0 0 38 42" fill="#402d08">
                <path d="M9 1H29V5H36Q38 15 33 19Q30 22 26 23Q24 26 21.500 27V33H24Q29 34 29 41H9Q9 34 14 33H16.500V27Q14 26 12 23Q8 22 5 19Q0 15 2 5H9ZM9 8H5Q5 16 10 19Q9 15 9 8ZM29 8Q29 15 28 19Q33 16 33 8Z" fillRule="evenodd" />
              </svg>
            </Trophy>
            <BestTitle>BESTWERTE</BestTitle>
            <NewBadge>1 NEU</NewBadge>
          </BestRow>
          <BestRow>
            <BestTile>
              <GaugeIcon size={46} />
            </BestTile>
            <BestName>Höchste Durchschn. Geschw.</BestName>
            <BestValue>
              26.2<BestUnit>km/h</BestUnit>
            </BestValue>
          </BestRow>
        </BestCard>

        <SectionHead>
          <SectionTitle>TRAININGSBELASTUNG</SectionTitle>
          <button aria-label="Info">
            <svg width="42" height="42" viewBox="0 0 42 42" fill="none" stroke="currentColor" strokeWidth="3" strokeLinecap="round">
              <circle cx="21" cy="21" r="19" />
              <path d="M18 18H22V30M17.500 30.500H26.500" />
              <circle cx="21" cy="11.500" r="2.600" fill="currentColor" stroke="none" />
            </svg>
          </button>
        </SectionHead>

        <Card>
          <SourceChip>
            <svg width="30" height="34" viewBox="0 0 30 34" fill="none" stroke="currentColor" strokeWidth="2" strokeLinecap="round" strokeLinejoin="round">
              <path d="M1 19H7L11 3L16 31L21 10L24 19H29" />
            </svg>
            Herzfrequenz (Strava)
          </SourceChip>
          <LoadRow>
            <Ring width="330" height="330" viewBox="0 0 330 330">
              <circle cx="165" cy="165" r="165" fill="none" stroke="#252525" strokeWidth="30" />
              <circle
                cx="165"
                cy="165"
                r="165"
                fill="none"
                stroke={lime}
                strokeWidth="30"
                strokeLinecap="round"
                strokeDasharray={`${(effort / maxEffort) * circumference} ${circumference}`}
                transform="rotate(-90 165 165)"
              />
              <text x="165" y="198" textAnchor="middle" fill="#fff" stroke="#fff" strokeWidth="2" strokeLinejoin="round">
                {effort}
              </text>
            </Ring>
            <div>
              <LoadTitle>Ein solides Trainingspensum.</LoadTitle>
              <LoadSub>
                Relative Anstrengung 77 · <Highlight>Moderat</Highlight>
              </LoadSub>
            </div>
          </LoadRow>
          <Zones>
            {zones.map((zone) => (
              <ZoneBar key={zone.name} $color={zone.color} />
            ))}
            {zones.map((zone) => (
              <ZoneName key={zone.name} $active={zone.name === 'Moderat'}>
                {zone.name}
              </ZoneName>
            ))}
            <ZoneMarker style={{ left: `${(effort / maxEffort) * 100}%` }} />
          </Zones>
          <Scale>
            <span>0</span>
            <span>50</span>
            <span>100</span>
            <span>150</span>
            <span>200+</span>
          </Scale>
          <FitnessLink href="#fitness">
            <svg width="36" height="32" viewBox="0 0 36 32" fill="none" stroke="currentColor" strokeWidth="4" strokeLinecap="round" strokeLinejoin="round">
              <path d="M3 2V30H34M8 20L14 11L22 18L31 8" />
            </svg>
            Sieh, wie diese Fahrt deine Fitness &amp; Form verändert
            <svg width="18" height="30" viewBox="0 0 18 30" fill="none" stroke="currentColor" strokeWidth="4" strokeLinecap="round" strokeLinejoin="round">
              <path d="M4 3L15 15L4 27" />
            </svg>
          </FitnessLink>
        </Card>

        <RhythmHead>
          <svg width="48" height="48" viewBox="-24 -24 48 48" fill="none" stroke={mint} strokeWidth="5" strokeLinecap="round">
            <circle r="9" />
            {[0, 45, 90, 135, 180, 225, 270, 315].map((deg) => (
              <path key={deg} d="M17 0H21" transform={`rotate(${deg})`} />
            ))}
          </svg>
          <RhythmTitle>TAGESRHYTHMUS</RhythmTitle>
          <RhythmDate>5. Juli</RhythmDate>
        </RhythmHead>

        <Card>
          <Track>
            <Ride $width={42} />
            <TrackGap $width={18}>
              <svg width="18" height="36" viewBox="0 0 18 36" stroke="#b0741a" strokeWidth="5">
                <path d="M0 18H18M9 0V36" />
              </svg>
            </TrackGap>
            <Ride $width={42} />
            <TrackGap $width={22} />
            <Ride $width={443} />
            <TrackGap $width={4} />
            <Pause />
            <TrackGap $width={10} />
            <LastRide>
              18 km
              <svg width="44" height="48" viewBox="0 0 44 48" fill="none" stroke="#e08a12" strokeWidth="7" strokeLinecap="round" strokeLinejoin="round">
                <circle cx="22" cy="24" r="22" fill="#5c3f10" stroke="none" />
                <path d="M18 9L25 24L18 39" />
              </svg>
            </LastRide>
          </Track>
          <Times>
            <span>15:57</span>
            <span>16:36</span>
          </Times>
        </Card>
      </Main>

      <Dock>
        <ShareButton>
          <svg width="42" height="54" viewBox="0 0 42 54" fill="none" stroke="currentColor" strokeWidth="5" strokeLinecap="round" strokeLinejoin="round">
            <path d="M13 18H9Q3 18 3 24V45Q3 51 9 51H33Q39 51 39 45V24Q39 18 33 18H29M21 33V4M12 12L21 3L30 12" />
          </svg>
          Workout teilen
        </ShareButton>
        <TabBar>
          <Tab $active>
            <BikeIcon width={112} stroke={5} />
            Statistiken
          </Tab>
          <Tab>
            <ToolsIcon />
            Werkstatt
          </Tab>
          <Tab>
            <ChainringIcon />
            Einstellungen
          </Tab>
        </TabBar>
      </Dock>
    </Screen>
  )
}

export default App
